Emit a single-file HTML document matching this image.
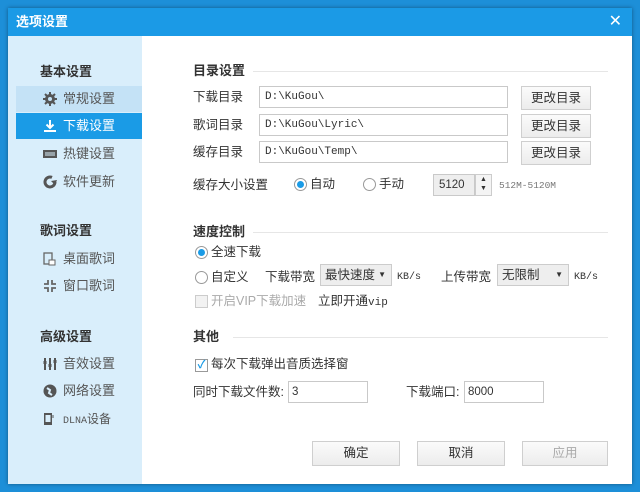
<!DOCTYPE html>
<html><head><meta charset="utf-8"><style>
*{margin:0;padding:0;box-sizing:border-box}
body{width:640px;height:492px;overflow:hidden;background:#1d8fd8;font-family:"Liberation Sans","Noto Sans CJK SC",sans-serif;font-size:12px;color:#333;position:relative}
.a{position:absolute;white-space:nowrap;line-height:15px}
#dlg{position:absolute;left:8px;top:8px;width:624px;height:476px;background:#fff;box-shadow:0 0 4px rgba(0,0,0,.4)}
#title{position:absolute;left:0;top:0;width:624px;height:28px;background:#1b9ae6;color:#fff;font-weight:bold;font-size:13px;line-height:28px;padding-left:8px}
#side{position:absolute;left:0;top:28px;width:134px;height:448px;background:#d9eefb}
.h{font-weight:bold;font-size:13px;color:#333}
.it{position:absolute;left:8px;width:126px;height:26px;line-height:26px;padding-left:47px;font-size:13px;color:#555}
.ic{position:absolute;left:27px;top:6px;width:14px;height:14px}
.sel{background:#1a9be6;color:#fff}
.lbl{font-size:12.5px;color:#333}
.inp{position:absolute;height:22px;border:1px solid #c9c9c9;background:#fff;font-family:"Liberation Mono",monospace;font-size:11px;line-height:20px;padding-left:5px}
.btn{position:absolute;border:1px solid #cfcfcf;background:linear-gradient(#fbfbfb,#ececec);text-align:center;font-size:12.5px;color:#333}
.sec{position:absolute;height:1px;background:#e6e6e6}
.rad{position:absolute;width:13px;height:13px;border:1px solid #999;border-radius:50%;background:#fff}
.rad.on::after{content:"";position:absolute;left:2px;top:2px;width:7px;height:7px;border-radius:50%;background:#1a9be6}
.sel2{position:absolute;height:22px;border:1px solid #ccc;background:#eee;font-size:12.5px;line-height:20px;padding-left:4px}
.sel2::after{content:"▼";position:absolute;right:5px;top:0;font-size:8px}
</style></head><body>
<div id="dlg">
<div id="title">选项设置<span class="a" style="right:10px;top:6px;font-weight:normal;font-size:16px">✕</span></div>
<div id="side">
<div class="a h" style="left:32px;top:28px">基本设置</div>
<div class="it" style="top:50px;background:#c4e2f6"><svg class="ic" viewBox="0 0 14 14"><path d="M7 0v14M0 7h14M2 2l10 10M12 2L2 12" stroke="#555" stroke-width="2"/><circle cx="7" cy="7" r="5" fill="#555"/><circle cx="7" cy="7" r="2" fill="#c4e2f6"/></svg>常规设置</div>
<div class="it sel" style="top:77px"><svg class="ic" viewBox="0 0 14 14"><path d="M7 1v8M3.5 5.5L7 9l3.5-3.5M1 12h12" stroke="#fff" stroke-width="2" fill="none"/></svg>下载设置</div>
<div class="it" style="top:105px"><svg class="ic" viewBox="0 0 14 14"><rect x="0" y="3" width="14" height="8" fill="#555"/><path d="M2 6h10M2 8h10" stroke="#d9eefb"/></svg>热键设置</div>
<div class="it" style="top:133px"><svg class="ic" viewBox="0 0 14 14"><path d="M12 7A5 5 0 1 1 9 2.4" stroke="#555" stroke-width="3" fill="none"/><path d="M8 6l6-1-2 5z" fill="#555"/></svg>软件更新</div>
<div class="a h" style="left:32px;top:187px">歌词设置</div>
<div class="it" style="top:210px"><svg class="ic" viewBox="0 0 14 14"><rect x="1" y="1" width="8" height="11" fill="none" stroke="#666" stroke-width="1.3"/><path d="M6 8h6v5H6z" fill="#fff" stroke="#666"/></svg>桌面歌词</div>
<div class="it" style="top:237px"><svg class="ic" viewBox="0 0 14 14"><path d="M5 1v4H1M9 1v4h4M5 13V9H1M9 13V9h4" stroke="#666" stroke-width="1.8" fill="none"/></svg>窗口歌词</div>
<div class="a h" style="left:32px;top:293px">高级设置</div>
<div class="it" style="top:315px"><svg class="ic" viewBox="0 0 14 14"><path d="M2 1v12M7 1v12M12 1v12" stroke="#555" stroke-width="2"/><rect x="0.5" y="4" width="3" height="3" fill="#555"/><rect x="5.5" y="7" width="3" height="3" fill="#555"/><rect x="10.5" y="3" width="3" height="3" fill="#555"/></svg>音效设置</div>
<div class="it" style="top:342px"><svg class="ic" viewBox="0 0 14 14"><circle cx="7" cy="7" r="6.5" fill="#555"/><path d="M4 4l3 2-1 3 3 2" stroke="#d9eefb" stroke-width="2" fill="none"/></svg>网络设置</div>
<div class="it" style="top:370px;font-size:12px"><svg class="ic" viewBox="0 0 14 14"><rect x="1" y="1" width="8" height="12" fill="#555"/><rect x="2.5" y="3" width="5" height="7" fill="#d9eefb"/><path d="M10 3v3" stroke="#555"/></svg><span style="font-family:'Liberation Mono';font-size:10px">DLNA</span>设备</div>
</div>

<div class="a h" style="left:185px;top:55px">目录设置</div><div class="sec" style="left:245px;top:63px;width:355px"></div>
<div class="a lbl" style="left:185px;top:82px">下载目录</div>
<div class="a lbl" style="left:185px;top:110px">歌词目录</div>
<div class="a lbl" style="left:185px;top:137px">缓存目录</div>
<div class="inp" style="left:251px;top:78px;width:249px">D:\KuGou\</div>
<div class="inp" style="left:251px;top:106px;width:249px">D:\KuGou\Lyric\</div>
<div class="inp" style="left:251px;top:133px;width:249px">D:\KuGou\Temp\</div>
<div class="btn" style="left:513px;top:78px;width:70px;height:24px;line-height:22px">更改目录</div>
<div class="btn" style="left:513px;top:106px;width:70px;height:24px;line-height:22px">更改目录</div>
<div class="btn" style="left:513px;top:133px;width:70px;height:24px;line-height:22px">更改目录</div>
<div class="a lbl" style="left:185px;top:170px">缓存大小设置</div>
<div class="rad on" style="left:286px;top:170px"></div><div class="a lbl" style="left:302px;top:169px">自动</div>
<div class="rad" style="left:355px;top:170px"></div><div class="a lbl" style="left:371px;top:169px">手动</div>
<div class="inp" style="left:425px;top:166px;width:42px;background:#eee;font-family:'Liberation Sans';font-size:11.5px">5120</div>
<div class="a" style="left:467px;top:166px;width:17px;height:22px;border:1px solid #ccc;background:#f4f4f4;font-size:7px;line-height:9px;text-align:center">▲<br>▼</div>
<div class="a" style="left:491px;top:170px;font-family:'Liberation Mono';font-size:9.5px;color:#777">512M-5120M</div>

<div class="a h" style="left:185px;top:216px">速度控制</div><div class="sec" style="left:245px;top:224px;width:355px"></div>
<div class="rad on" style="left:187px;top:238px"></div><div class="a lbl" style="left:203px;top:237px">全速下载</div>
<div class="rad" style="left:187px;top:263px"></div><div class="a lbl" style="left:203px;top:262px">自定义</div>
<div class="a lbl" style="left:257px;top:262px">下载带宽</div>
<div class="sel2" style="left:312px;top:256px;width:72px">最快速度</div>
<div class="a" style="left:389px;top:262px;font-family:'Liberation Mono';font-size:10px">KB/s</div>
<div class="a lbl" style="left:433px;top:262px">上传带宽</div>
<div class="sel2" style="left:489px;top:256px;width:72px">无限制</div>
<div class="a" style="left:566px;top:262px;font-family:'Liberation Mono';font-size:10px">KB/s</div>
<div class="a" style="left:187px;top:287px;width:13px;height:13px;border:1px solid #ccc;background:#f2f2f2"></div>
<div class="a lbl" style="left:203px;top:286px;color:#aaa">开启VIP下载加速</div>
<div class="a lbl" style="left:310px;top:286px">立即开通<span style="font-family:'Liberation Mono';font-size:11px">vip</span></div>

<div class="a h" style="left:185px;top:321px">其他</div><div class="sec" style="left:225px;top:329px;width:375px"></div>
<div class="a" style="left:187px;top:351px;width:13px;height:13px;border:1px solid #999;background:#fff;color:#1a9be6;font-size:11px;line-height:11px;text-align:center;font-weight:bold">✓</div>
<div class="a lbl" style="left:203px;top:349px">每次下载弹出音质选择窗</div>
<div class="a lbl" style="left:185px;top:377px">同时下载文件数:</div>
<div class="inp" style="left:280px;top:373px;width:80px;font-family:'Liberation Sans';font-size:11.5px;padding-left:3px">3</div>
<div class="a lbl" style="left:398px;top:377px">下载端口:</div>
<div class="inp" style="left:456px;top:373px;width:80px;font-family:'Liberation Sans';font-size:11.5px;padding-left:3px">8000</div>

<div class="btn" style="left:304px;top:433px;width:88px;height:25px;line-height:23px">确定</div>
<div class="btn" style="left:409px;top:433px;width:88px;height:25px;line-height:23px">取消</div>
<div class="btn" style="left:514px;top:433px;width:86px;height:25px;line-height:23px;color:#aaa">应用</div>
</div>
</body></html>
